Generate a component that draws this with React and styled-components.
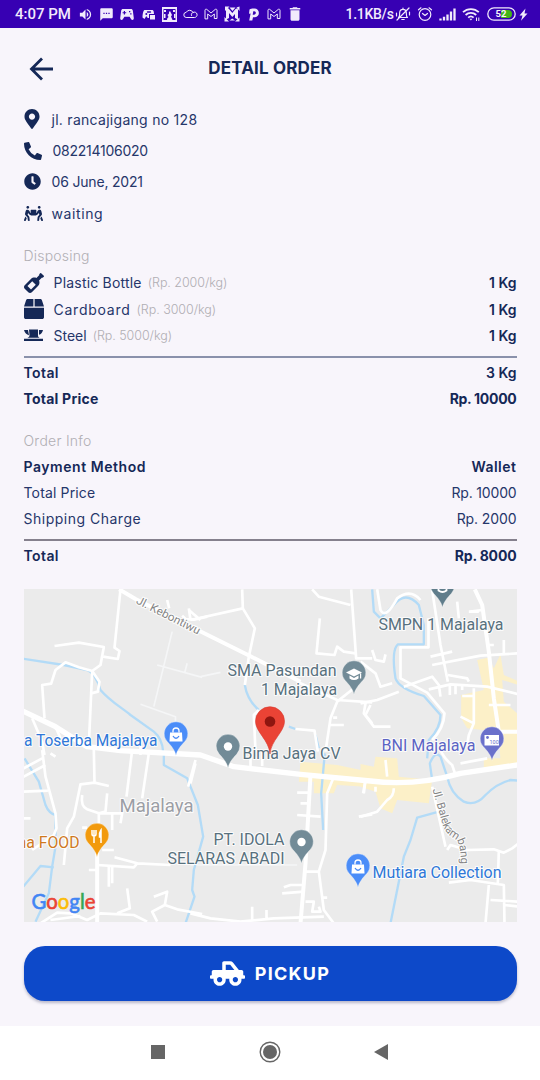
import React from "react";
import styled, { createGlobalStyle } from "styled-components";
import { FaMapMarkerAlt, FaPhoneAlt, FaClock, FaPeopleCarry, FaWineBottle, FaBox, FaTruckPickup } from "react-icons/fa";
import { MdVolumeUp, MdSms, MdDelete } from "react-icons/md";

const NAVY = "#152857";

const GlobalStyle = createGlobalStyle`
  * { box-sizing: border-box; }
  body { margin: 0; background: #f8f5fb; font-family: Inter, "Open Sans", sans-serif; color: ${NAVY}; }
  svg { display: block; flex: none; }
`;

const Screen = styled.div`
  width: 540px;
  height: 1080px;
  display: flex;
  flex-direction: column;
  background: #f8f5fb;
  overflow: hidden;
`;

const StatusBar = styled.div`
  height: 28px;
  flex: none;
  background: #3700b3;
  color: #f1eafc;
  display: flex;
  align-items: center;
  padding: 0 10px 0 15px;
  font-family: Roboto, sans-serif;
`;
const Clock = styled.span`
  font-size: 15px;
  font-weight: 500;
  letter-spacing: 0px;
  width: 60.5px;
  flex: none;
  white-space: nowrap;
`;
const StatusIcons = styled.div`
  display: grid;
  grid-template-columns: repeat(11, 21px);
  align-items: center;
  justify-items: center;
  margin-left: -1px;
`;
const Speed = styled.span`
  margin-left: 40px;
  width: 51px;
  font-size: 14px;
  font-weight: 500;
  letter-spacing: -0.3px;
  white-space: nowrap;
`;
const SystemIcons = styled.div`
  display: grid;
  grid-template-columns: 17px 27px 17px 31px 29px 15px;
  align-items: center;
  justify-items: center;
  margin-left: 1px;
`;

const Header = styled.header`
  height: 75.5px;
  flex: none;
  display: grid;
  grid-template-columns: 36px 1fr 36px;
  align-items: center;
  padding: 5.5px 23px 0;
`;
const Title = styled.h1`
  margin: 0;
  text-align: center;
  font-size: 17px;
  line-height: 24px;
  font-weight: 700;
  letter-spacing: 0.17px;
  padding-bottom: 2px;
`;

const Content = styled.main`
  flex: 1;
  padding: 0 23.5px;
  display: flex;
  flex-direction: column;
`;
const Info = styled.div`
  height: 31.4px;
  display: flex;
  align-items: center;
`;
const IconSlot = styled.span`
  width: ${(p) => p.$w || 28}px;
  margin-left: ${(p) => p.$shift || 0}px;
  flex: none;
`;
const Text = styled.span`
  color: ${(p) => (p.$weight ? NAVY : "#26366a")};
  font-size: ${(p) => p.$size || 14}px;
  font-weight: ${(p) => p.$weight || 400};
  letter-spacing: ${(p) => p.$ls || 0}px;
  white-space: nowrap;
`;
const SectionLabel = styled(Text)`
  color: #b1afb4;
  font-weight: 300;
  height: 26px;
  line-height: 26px;
  margin-top: ${(p) => p.$top}px;
`;
const Row = styled.div`
  display: flex;
  align-items: center;
  height: ${(p) => p.$h || 25.7}px;
`;
const Price = styled(Text)`
  color: #b0aeb3;
  font-weight: 300;
  margin-left: 6px;
`;
const Value = styled(Text)`
  margin-left: auto;
`;
const Divider = styled.div`
  height: 2px;
  flex: none;
  background: ${(p) => p.$color};
  margin: ${(p) => p.$m};
`;
const MapCard = styled.div`
  height: 333px;
  margin-top: 20px;
  overflow: hidden;
  flex: none;
`;
const Pickup = styled.button`
  margin-top: 24px;
  height: 55px;
  flex: none;
  border: 0;
  border-radius: 21px;
  background: #0d49c9;
  color: #fff;
  display: flex;
  align-items: center;
  justify-content: center;
  gap: 10px;
  font: 700 18px Inter, sans-serif;
  letter-spacing: 1.25px;
  box-shadow: 0 2px 3px rgba(20, 30, 80, 0.28);
`;
const NavBar = styled.nav`
  height: 54px;
  flex: none;
  background: #fff;
  display: flex;
  align-items: center;
  justify-content: space-between;
  padding: 0 152px 2px 151px;
`;

const Glyph = ({ w = 16, h = 16, box, children, ...rest }) => (
  <svg width={w} height={h} viewBox={box || `0 0 ${w} ${h}`} fill="none" stroke="currentColor" strokeWidth="1.4" strokeLinejoin="round" strokeLinecap="round" {...rest}>
    {children}
  </svg>
);
const Gmail = () => (
  <Glyph w={14} h={12} strokeWidth="1">
    <path d="M1 10.5V2.2C1 1.2 2.2.9 2.9 1.5L7 5l4.100-3.500c.7-.6 1.900-.3 1.900.7v8.300h-2.700V6L7 8.500 3.700 6v4.500z" />
  </Glyph>
);
const Gamepad = () => (
  <Glyph w={14} h={13} stroke="none" fill="currentColor">
    <path fillRule="evenodd" d="M3 1h8c1 0 1.600.6 1.800 1.500l1 7.500c.2 2-1.800 2.600-2.800 1L9.600 8.800H4.400L3 11c-1 1.600-3 1-2.800-1l1-7.500C1.400 1.600 2 1 3 1zM3.800 3v1.200H2.600v1.100h1.200v1.200H5V5.300h1.200V4.200H5V3zM9 3v1.300h1.300V3zm1.200 2.200v1.300h1.300V5.200z" />
  </Glyph>
);
const Discord = () => (
  <Glyph w={13} h={13} stroke="none" fill="currentColor">
    <path d="M3 2h7c1 0 1.500.6 1.700 1.600L12 6H7v4H5.500L5 8.500H4L2.500 11 .5 9.500c0-3 .5-5 1-6.300C1.800 2.400 2.200 2 3 2z" />
    <circle cx="4.300" cy="6" r="1" fill="#3700b3" />
    <path d="M8 7h5v4.500H8z" />
    <path d="M5.500 4h3" stroke="#3700b3" />
  </Glyph>
);
const GameTile = () => (
  <Glyph w={15} h={15} stroke="none" fill="currentColor">
    <path fillRule="evenodd" d="M0 0h15v15H0zM1.500 2v11h12V2z" />
    <path d="M5 13c0-2 1-2.500 1.500-3L5.500 8 7 6.500V5l1-1 1 2 1 2-1 1.500 1.500 3.500zM2 3h2v2H2zM11 3h2v2h-2zM2 7h1.500v4H2zM12 7h1.500v4H12z" />
  </Glyph>
);
const CloudOutline = () => (
  <Glyph w={15} h={12} strokeWidth="1">
    <path d="M4 9.500H3.500a2.600 2.600 0 0 1-.2-5.200A3.700 3.700 0 0 1 10 4.500 2.700 2.700 0 1 1 11.500 9.500H4z" />
    <path d="M10 4.500c-1.500.3-2 1.800-1.500 3" />
  </Glyph>
);
const Wheel = () => (
  <Glyph w={16} h={16} stroke="none" fill="currentColor">
    <path d="M1 .5h4.500L1 5zM15.500.5V5L12.500 1.500zM.5 15.500V11l4.500 4.500zM15.500 15.500H11l4.500-4z" />
    <path d="M2 13.500V4C2 2 3.500 1.500 4.800 2.800L8.300 7 11.300 3.300C12.500 2 14 2.500 14 4v9.500L11 12V8L8.300 11 5 7v5z" />
    <path d="M5.500 1.500 8.500 5 11.500 1.500zM5.500 14.500 8.200 12.500 11 14.500z" />
  </Glyph>
);
const PMark = () => (
  <Glyph w={11} h={13} stroke="none" fill="currentColor">
    <path fillRule="evenodd" d="M1.500 1.500C3 .4 5 .3 6.500.5a4.400 4.400 0 0 1 0 8.800H5L4.300 12.500H1.200L2.600 5.500 1 5.800zM5.300 3.300 4.700 6.700H6c2.300 0 2.500-3.400.3-3.400z" />
  </Glyph>
);
const Mute = () => (
  <Glyph w={16} h={16} strokeWidth="1.200">
    <path d="M3.500 11.500c1.500-1 1-3 1.200-5A3.300 3.300 0 0 1 8 3.300a3.300 3.300 0 0 1 3.300 3.200c.2 2-.3 4 1.200 5zM6.800 13.500h2.400M14 2 2 14M1.500 7v3M14.500 6v3M8 2v1" />
  </Glyph>
);
const Alarm = () => (
  <Glyph w={16} h={16} strokeWidth="1.200">
    <circle cx="8" cy="8.500" r="5.800" />
    <path d="m5.500 7.500 2.500 2 2.500-2M1.500 3.800 4 1.800M14.500 3.800 12 1.800" />
  </Glyph>
);
const Signal = () => (
  <Glyph w={17} h={13} strokeWidth="2.300" strokeLinecap="butt">
    <path d="M1.500 12.500v-2M5 12.500v-3.700M8.500 12.500V6.500M12 12.500V3.500M15.500 12.500V.5" />
  </Glyph>
);
const Wifi = () => (
  <Glyph w={18} h={15} strokeWidth="1.800" strokeLinecap="butt">
    <path d="M1 5.200a11.500 11.500 0 0 1 15.800 0M3.600 8a7.700 7.700 0 0 1 10.600 0M6.200 10.600a4 4 0 0 1 5.400 0" />
    <path d="M7.400 11.700 8.900 13.500l1.500-1.800z" fill="currentColor" stroke="none" />
    <path d="M14.500 10.500v3.500M16.800 10.500v3.500" strokeWidth="1" />
  </Glyph>
);
const Battery = () => (
  <Glyph w={29} h={14} strokeWidth="1.300">
    <path d="M14 3h7a4 4 0 0 1 0 8h-7z" fill="#43b516" stroke="none" />
    <rect x=".8" y=".8" width="27.400" height="12.400" rx="6.200" />
    <text x="14" y="10.300" textAnchor="middle" fontFamily="Roboto, sans-serif" fontSize="9.500" fontWeight="700" fill="#f8f5fb" stroke="none">52</text>
  </Glyph>
);
const Bolt = () => (
  <Glyph w={9} h={13} stroke="none" fill="currentColor">
    <path d="M6.500.5.5 7.500h3L2 12.800 8.500 5.500h-3z" />
  </Glyph>
);
const BackArrow = () => (
  <Glyph w={36} h={26} strokeWidth="2.800" strokeLinejoin="miter" strokeLinecap="butt">
    <path d="M30 13H8.500M19 2.600 8.500 13 19 23.400" />
  </Glyph>
);
const Anvil = () => (
  <Glyph w={19} h={13} stroke="none" fill="currentColor">
    <path d="M0 1h4l1 5.200C2.500 5.600.8 4 0 1zM5 .5h9v5.800c0 1.600.7 2 1.500 2.400h-12c1-.4 2-.8 2-2.400zM15 1h4c-.6 2.800-2 4.300-4 4.800zM0 9.700h19v2.300H0z" />
  </Glyph>
);

/* Map tiles: each holds paths in its own coordinates, three units to a pixel. */
const TILES = [
  {
    x: 20, y: 585,
    water: ["M0 220 130 240 200 255Q225 265 240 315C270 350 300 365 330 390L400 440Q425 460 428 500"],
    faint: ["M455 140 400 365M410 240 545 277M500 235 493 262M360 358 465 395V420M540 275 600 262"],
    roads: ["M300 13 282 188 297 198 292 222 248 215", "M102 183 175 173 250 186 240 240 215 258 175 247 135 232 105 255 92 296 65 300 72 400", "M215 258 205 480", "M215 258 237 290 232 320 212 325", "M35 400 65 470 72 510M105 425 120 460", "M440 45 446 70M505 75 540 105M485 92 495 102 520 104 560 95M360 470V510"],
    big: ["M296 13 345 42 545 142 690 214 840 290"],
    main: ["M0 375 105 425 200 485 300 497 540 510 640 545 840 568 1050 588Q1180 605 1320 565L1510 537"],
  },
  {
    x: 190, y: 585,
    water: ["M163 300Q170 345 205 375", "M295 425 315 432M375 450 385 490"],
    roads: ["M155 13 157 70 193 130 175 215 163 300M0 105 157 70M0 105-5 70", "M365 13 385 35 480 60M482 13 497 220H545", "M388 100 378 205 432 210 440 185 460 200 495 205", "M490 310 440 350 420 400 405 500M428 398H440M415 420H460", "M315 432 372 437 382 500M205 375 190 390 195 500", "M320 290 440 345 545 352", "M540 360 525 390 545 415"],
  },
  {
    x: 360, y: 585,
    yellow: ["M350 225 420 210 430 270 475 290V530H420L415 440 320 430 302 400V330L370 315Z"],
    patches: ["M378 205 420 208 400 250ZM425 285 475 300V390L430 350Z"],
    water: ["M35 13 40 80 60 100 100 60Q135 15 175 60L190 120V178H112Q92 195 105 280 115 310 190 333L240 390Q240 430 205 465L200 520"],
    roads: ["M50 13 60 75Q75 105 110 40 150 10 180 45M204 100V187H120V280L200 323 252 385Q250 430 215 465", "M215 15 240 180 262 290M215 240 360 212 475 205M210 215 275 200M290 50 295 100M325 80H355", "M130 305 215 275 235 300 240 335M205 313 270 298 380 305 475 328", "M268 300V330M285 300V328M305 300V315M262 270 320 280 325 290", "M340 310V415L300 395M305 333H340M340 415 325 450 320 480", "M0 355 50 345 115 320M15 355 10 385 40 425H90M0 230 45 265 60 305 95 295M35 195 45 225 70 230 75 208", "M365 75 330 80M385 180H400M430 165V205M385 360 450 360"],
    big: ["M343 13 365 60 385 200 400 340 415 440H475"],
  },
  {
    x: 20, y: 750,
    water: ["M12 25 55 95 75 165Q85 190 105 195V290L95 350 85 430 45 515", "M100 352 60 348 0 420", "M430 15V45L500 85 532 165 548 260 520 360 515 420 522 440 495 520"],
    roads: ["M65 0 75 80 105 190 108 235 100 255 35 300M0 60 65 25M0 85 75 45M10 125 82 122M10 205H30M90 10 105 20", "M220 0 222 98 265 108M222 98 180 103 160 200 140 235 130 345", "M185 135Q180 170 200 178L235 190H305L300 220M260 130 255 185 235 190V220M275 190V240M185 233H200", "M335 0 318 140M385 10 365 145M525 30 503 110", "M245 300H280M205 360H230M230 345 340 352 350 340 282 322M350 340 450 345M275 350V400M265 350V410", "M60 520 110 488 150 490 200 510 240 490 340 495 380 515M320 415 328 475 290 490M90 510 180 498M400 440 440 425 433 465 395 485 410 515M433 465 470 478 545 492"],
    big: ["M230 300V520"],
  },
  {
    x: 190, y: 750,
    yellow: ["M330 35 440 45 550 68V112L440 105 430 130H370V95H325Z"],
    water: ["M403 10 392 130 398 240"],
    faint: ["M0 345H320"],
    roads: ["M320 128H360M330 160H355M320 195 390 200M430 80 410 130 405 300 385 365 400 480 430 520M345 365H385M410 443H395", "M275 430 340 425M280 412 300 405H335M345 455H370L365 485H390L385 470", "M0 490 60 505 150 515 250 505 400 500M185 470V515M228 480V510M180 0V48M215 0V48M15 40 0 100M525 90 520 130M505 200 545 193"],
    big: ["M360 75 345 340 330 520"],
  },
  {
    x: 360, y: 750,
    yellow: ["M0 42 40 50 45 20 110 25 115 80 215 90 205 160 110 150 95 190 60 175 45 125 0 110Z", "M370 25H470V45L370 62Z"],
    water: ["M215 90 208 40Q225 0 240 20L260 80Q270 130 310 155 345 170 375 135 410 100 450 90L475 92", "M235 185 170 203 150 270 130 320 90 520"],
    roads: ["M240 0Q250 25 275 45L285 75M300 40 380 25M75 30 80 80M100 115Q100 140 80 150L50 185 0 200M15 90 8 130M45 110V125", "M215 110 255 290M260 300 270 285 320 300 400 298 430 308 455 295 475 280M415 300 412 400M265 398 330 390 430 405 432 520M385 405 375 520M390 450 475 455M432 465 475 470"],
  },
];

const Layer = ({ kind, color, width }) =>
  TILES.map((t, i) => (
    <g key={i} transform={`translate(${t.x} ${t.y}) scale(.33333)`}>
      {(t[kind] || []).map((d, j) => (
        <path key={j} d={d} fill={width ? "none" : color} stroke={width ? color : "none"} strokeWidth={width} strokeLinejoin="round" />
      ))}
    </g>
  ));

const Pin = ({ x, y, color, children }) => (
  <g transform={`translate(${x} ${y})`}>
    <path d="M0 19C-.8 14-5 9-8.800 5A11.800 11.800 0 1 1 8.800 5C5 9 .8 14 0 19Z" fill={color} stroke="#fff" strokeOpacity=".45" strokeWidth=".7" />
    {children}
  </g>
);
const Dot = () => <circle r="4.200" cy="-2.500" fill="#fff" />;
const Bag = () => (
  <g>
    <path d="M-6-4H6L6.500 5h-13Z" fill="#fff" />
    <path d="M-3-4V-5.500a3 3 0 0 1 6 0V-4" fill="none" stroke="#fff" strokeWidth="1.300" />
    <path d="M-3-.5Q0 4 3-.5" fill="none" stroke="#4285f4" strokeWidth="1.300" />
  </g>
);
const Label = ({ x, y, len, color = "#58717e", size = 16, children, ...rest }) => (
  <text x={x} y={y} textLength={len} lengthAdjust="spacingAndGlyphs" fontSize={size} fill={color} stroke="#fff" strokeOpacity=".85" strokeWidth="2.200" paintOrder="stroke" strokeLinejoin="round" {...rest}>
    {children}
  </text>
);

const StreetMap = () => (
  <svg width="493" height="333" viewBox="23.5 589 493 333" fontFamily="Roboto, sans-serif">
    <defs>
      <path id="balekambang" d="M432 789.500 442 824Q444 831 450 836L456 840Q461 844 460.500 880" />
    </defs>
    <rect x="23" y="589" width="494" height="334" fill="#ebebeb" />
    <Layer kind="yellow" color="#fcf0c8" />
    <Layer kind="patches" color="#e9e9e9" />
    <Layer kind="faint" color="#f5f6f7" width={5} />
    <Layer kind="water" color="#b3dbf7" width={7} />
    <Layer kind="roads" color="#fff" width={8} />
    <Layer kind="big" color="#fff" width={12} />
    <Layer kind="main" color="#fff" width={16} />
    <Label x="135" y="603" len="70" size="11.500" color="#858585" transform="rotate(27 135 603)">Jl. Kebontiwu</Label>
    <Label x="378" y="630" len="125">SMPN 1 Majalaya</Label>
    <Label x="227" y="675.500" len="109">SMA Pasundan</Label>
    <Label x="260.500" y="694.500" len="76">1 Majalaya</Label>
    <Label x="242" y="758.500" len="98">Bima Jaya CV</Label>
    <Label x="23.500" y="746" len="133.500" color="#2e77d8">a Toserba Majalaya</Label>
    <Label x="381" y="751" len="94" color="#5c64c4">BNI Majalaya</Label>
    <Label x="119" y="812" len="74" size="18" color="#9b9ea5">Majalaya</Label>
    <Label x="17" y="847.500" len="62" color="#cf791f">na FOOD</Label>
    <Label x="213" y="844.500" len="71">PT. IDOLA</Label>
    <Label x="167" y="863.500" len="117">SELARAS ABADI</Label>
    <Label x="372" y="878" len="129" color="#2e77d8">Mutiara Collection</Label>
    <text fontSize="11.200" fill="#858585" stroke="#fff" strokeWidth="2" strokeOpacity=".85" paintOrder="stroke">
      <textPath href="#balekambang">Jl. Balekambang</textPath>
    </text>
    <Pin x="442" y="588.500" color="#607d8b"><path d="M-4 0V2q4 3 8 0V0" fill="none" stroke="#fff" strokeWidth="1.800" /></Pin>
    <Pin x="353.500" y="675.500" color="#728b97">
      <path d="M-8-3 0-7 8-3 0 1ZM-4.500 0 0 2.500 4.500 0V3Q0 6-4.500 3ZM6-2h1.200v5H6Z" fill="#fff" />
    </Pin>
    <Pin x="227.500" y="749" color="#728b97"><Dot /></Pin>
    <Pin x="301" y="844.500" color="#728b97"><Dot /></Pin>
    <Pin x="175.500" y="736.500" color="#4b8df8"><Bag /></Pin>
    <Pin x="357.500" y="868.500" color="#4b8df8"><Bag /></Pin>
    <Pin x="491.500" y="741.500" color="#6a70cb">
      <path d="M-7.500-6.500H7V4H-7.500Z" fill="#fff" />
      <circle cx="-4.500" cy="-4" r="1.400" fill="#6a70cb" />
      <text x="-2.500" y="2.200" fontSize="5.500" fill="#6a70cb">100</text>
    </Pin>
    <Pin x="96.500" y="838" color="#f29a0d">
      <path d="M-5-8v4q0 2 2 2t2-2V-8M-3-8V5M4 5V-8Q1.800-5 2.500-1H4" fill="none" stroke="#fff" strokeWidth="1.500" />
    </Pin>
    <path d="M269.500 754C268.500 740 255 732 255 721.200a14.500 14.500 0 0 1 29 0C284 732 270.500 740 269.500 754Z" fill="#ea4335" stroke="#d83a30" strokeWidth=".6" />
    <circle cx="269.500" cy="721.500" r="5.300" fill="#8f1610" />
    <text x="31" y="908.500" textLength="64" lengthAdjust="spacingAndGlyphs" fontFamily="Lato, sans-serif" fontSize="21" fontWeight="400" strokeWidth=".6">
      <tspan fill="#4285f4" stroke="#4285f4">G</tspan><tspan fill="#ea4335" stroke="#ea4335">o</tspan><tspan fill="#fbbc05" stroke="#fbbc05">o</tspan><tspan fill="#4285f4" stroke="#4285f4">g</tspan><tspan fill="#34a853" stroke="#34a853">l</tspan><tspan fill="#ea4335" stroke="#ea4335">e</tspan>
    </text>
  </svg>
);

const CONTACT = [
  { icon: <FaMapMarkerAlt size={20} />, shift: -2, w: 30, text: "jl. rancajigang no 128", ls: 0.28 },
  { icon: <FaPhoneAlt size={18} />, text: "082214106020", w: 29, ls: -0.25 },
  { icon: <FaClock size={17} />, text: "06 June, 2021", ls: -0.18 },
  { icon: <FaPeopleCarry size={19} />, text: "waiting", ls: 0.6 },
];
const ITEMS = [
  { icon: <FaWineBottle size={20} />, name: "Plastic Bottle", price: "(Rp. 2000/kg)", h: 27, ls: 0.2 },
  { icon: <FaBox size={20} />, name: "Cardboard", price: "(Rp. 3000/kg)", h: 26.5, ls: 0.75 },
  { icon: <Anvil />, name: "Steel", price: "(Rp. 5000/kg)", h: 25.5, ls: 0 },
];

export default function App() {
  return (
    <Screen>
      <GlobalStyle />
      <StatusBar>
        <Clock>4:07 PM</Clock>
        <StatusIcons>
          <MdVolumeUp size={15} />
          <MdSms size={15} />
          <Gamepad />
          <Discord />
          <GameTile />
          <CloudOutline />
          <Gmail />
          <Wheel />
          <PMark />
          <Gmail />
          <MdDelete size={18} />
        </StatusIcons>
        <Speed>1.1KB/s</Speed>
        <SystemIcons>
          <Mute />
          <Alarm />
          <Signal />
          <Wifi />
          <Battery />
          <Bolt />
        </SystemIcons>
      </StatusBar>
      <Header>
        <BackArrow />
        <Title>DETAIL ORDER</Title>
      </Header>
      <Content>
        {CONTACT.map((c) => (
          <Info key={c.text}>
            <IconSlot $w={c.w} $shift={c.shift}>{c.icon}</IconSlot>
            <Text $ls={c.ls}>{c.text}</Text>
          </Info>
        ))}
        <SectionLabel $top={14} $ls={0.2}>Disposing</SectionLabel>
        {ITEMS.map((it) => (
          <Row key={it.name} $h={it.h}>
            <IconSlot $w={30}>{it.icon}</IconSlot>
            <Text $ls={it.ls}>{it.name}</Text>
            <Price $size={12.5} $ls={-0.05}>{it.price}</Price>
            <Value $weight={600}>1 Kg</Value>
          </Row>
        ))}
        <Divider $color="#8a91ab" $m="7.5px 0 2.5px" />
        <Row><Text $weight={600} $ls={0.4}>Total</Text><Value $weight={600}>3 Kg</Value></Row>
        <Row><Text $weight={700} $ls={0.22}>Total Price</Text><Value $weight={700} $ls={-0.28}>Rp. 10000</Value></Row>
        <SectionLabel $top={16.5} $ls={0.25}>Order Info</SectionLabel>
        <Row><Text $weight={600} $ls={0.55}>Payment Method</Text><Value $weight={600} $ls={0.5}>Wallet</Value></Row>
        <Row><Text $ls={0.15}>Total Price</Text><Value $ls={-0.17}>Rp. 10000</Value></Row>
        <Row><Text $ls={0.5}>Shipping Charge</Text><Value $ls={-0.1}>Rp. 2000</Value></Row>
        <Divider $color="#85808d" $m="7.5px 0 2.5px" />
        <Row><Text $weight={600} $ls={0.4}>Total</Text><Value $weight={700} $ls={-0.15}>Rp. 8000</Value></Row>
        <MapCard><StreetMap /></MapCard>
        <Pickup><FaTruckPickup size={35} />PICKUP</Pickup>
      </Content>
      <NavBar>
        <Glyph w={14} h={14} stroke="none" fill="#666"><rect width="14" height="14" /></Glyph>
        <Glyph w={22} h={22} stroke="#666"><circle cx="11" cy="11" r="9.800" /><circle cx="11" cy="11" r="7" fill="#666" stroke="none" /></Glyph>
        <Glyph w={14} h={16} stroke="none" fill="#666"><path d="M14 0v16L0 8z" /></Glyph>
      </NavBar>
    </Screen>
  );
}
